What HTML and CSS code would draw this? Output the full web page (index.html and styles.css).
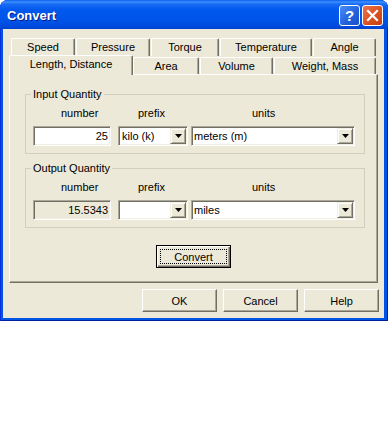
FILE: index.html
```html
<!DOCTYPE html>
<html lang="en">
<head>
  <meta charset="UTF-8" />
  <title>Convert</title>
  <link rel="stylesheet" href="styles.css">
</head>
<body>

<div class="window">
  <div class="titlebar">
    <div class="title">Convert</div>
    <div class="caption-buttons">
      <div class="cap-btn help">?</div>
      <div class="cap-btn close">
        <svg width="13" height="13" viewBox="0 0 13 13">
          <path d="M2 2 L11 11 M11 2 L2 11" stroke="#fff" stroke-width="2.2" fill="none" stroke-linecap="square" />
        </svg>
      </div>
    </div>
  </div>

  <div class="client">
    <!-- tab strip, two rows -->
    <div class="tabs">
      <div class="tab-row back">
        <div class="tab w-speed">Speed</div>
        <div class="tab w-pressure">Pressure</div>
        <div class="tab w-torque">Torque</div>
        <div class="tab w-temp">Temperature</div>
        <div class="tab w-angle">Angle</div>
      </div>
      <div class="tab-row front">
        <div class="tab selected w-length">Length, Distance</div>
        <div class="tab w-area">Area</div>
        <div class="tab w-volume">Volume</div>
        <div class="tab w-weight">Weight, Mass</div>
      </div>
    </div>

    <div class="panel">
      <fieldset class="group">
        <legend>Input Quantity</legend>
        <div class="labels">
          <span class="lbl-number">number</span>
          <span class="lbl-prefix">prefix</span>
          <span class="lbl-units">units</span>
        </div>
        <div class="fields">
          <div class="textbox">25</div>
          <div class="combo prefix">
            <span class="combo-text">kilo (k)</span>
            <span class="drop"><svg width="7" height="4" viewBox="0 0 7 4"><polygon points="0,0 7,0 3.5,4" fill="#000" /></svg></span>
          </div>
          <div class="combo units">
            <span class="combo-text">meters (m)</span>
            <span class="drop"><svg width="7" height="4" viewBox="0 0 7 4"><polygon points="0,0 7,0 3.5,4" fill="#000" /></svg></span>
          </div>
        </div>
      </fieldset>

      <fieldset class="group second">
        <legend>Output Quantity</legend>
        <div class="labels">
          <span class="lbl-number">number</span>
          <span class="lbl-prefix">prefix</span>
          <span class="lbl-units">units</span>
        </div>
        <div class="fields">
          <div class="textbox readonly">15.5343</div>
          <div class="combo prefix">
            <span class="combo-text"></span>
            <span class="drop"><svg width="7" height="4" viewBox="0 0 7 4"><polygon points="0,0 7,0 3.5,4" fill="#000" /></svg></span>
          </div>
          <div class="combo units">
            <span class="combo-text">miles</span>
            <span class="drop"><svg width="7" height="4" viewBox="0 0 7 4"><polygon points="0,0 7,0 3.5,4" fill="#000" /></svg></span>
          </div>
        </div>
      </fieldset>

      <div class="convert-row">
        <button class="btn default"><span class="focus">Convert</span></button>
      </div>
    </div>

    <div class="dialog-buttons">
      <button class="btn">OK</button>
      <button class="btn">Cancel</button>
      <button class="btn">Help</button>
    </div>
  </div>
</div>

</body>
</html>
```

FILE: styles.css
```css
body {
  margin: 0;
  background: #fff;
  font-family: "Liberation Sans", Arial, sans-serif;
  font-size: 11px;
  color: #000;
}

.window {
  width: 388px;
  height: 321px;
  box-sizing: border-box;
  display: flex;
  flex-direction: column;
  background: #0055e5;
  border-radius: 8px 8px 0 0;
  box-shadow: inset 1px 0 #0831d9, inset -1px 0 #001ea0, inset 0 -1px #001ea0;
}

.titlebar {
  height: 29px;
  flex: none;
  display: flex;
  align-items: center;
  padding: 0 5px 0 7px;
  border-radius: 8px 8px 0 0;
  background: linear-gradient(#0a5ff0 0, #3d90fb 2px, #1a6cf5 4px, #0058ee 10px, #0054e8 20px, #0049db 27px, #0040cc 29px);
}

.title {
  margin-top: 2px;
  color: #fff;
  font-weight: bold;
  font-size: 13px;
  text-shadow: 1px 1px #0a1883;
}

.caption-buttons {
  margin-left: auto;
  margin-top: 1px;
  display: flex;
  gap: 2px;
}

.cap-btn {
  width: 21px;
  height: 21px;
  box-sizing: border-box;
  border: 1px solid #fff;
  border-radius: 3px;
  display: flex;
  align-items: center;
  justify-content: center;
  color: #fff;
}

.cap-btn.help {
  background: linear-gradient(135deg, #4a8df8, #2260dc 60%, #1a4fc8);
  font-weight: bold;
  font-size: 15px;
}

.cap-btn.close {
  background: linear-gradient(135deg, #e9744e, #d9501f 60%, #c13e12);
}

.client {
  flex: 1;
  margin: 0 4px 3px 3px;
  background: #ece9d8;
}

/* tabs */
.tabs {
  padding-top: 9px;
}

.tab-row {
  display: flex;
  gap: 1px;
  height: 18px;
}

.tab-row.back {
  padding-left: 8px;
}

.tab-row.front {
  padding-left: 6px;
}

.tab {
  box-sizing: border-box;
  height: 18px;
  border-top: 1px solid #fff;
  border-left: 1px solid #fff;
  border-right: 1px solid #716f64;
  box-shadow: inset -1px 0 #aca899;
  border-radius: 2px 2px 0 0;
  background: #ece9d8;
  text-align: center;
  line-height: 17px;
}

.tab-row.front .tab {
  margin-top: 1px;
  height: 17px;
  line-height: 17px;
}

.tab-row.front .tab.selected {
  position: relative;
  z-index: 1;
  margin-top: -1px;
  margin-right: -1px;
  height: 20px;
  line-height: 16px;
}

.w-speed { width: 64px; }
.w-pressure { width: 74px; }
.w-torque { width: 68px; }
.w-temp { width: 92px; }
.w-angle { width: 63px; }
.w-length { width: 124px; }
.w-area { width: 66px; }
.w-volume { width: 73px; }
.w-weight { width: 102px; }

/* tab page */
.panel {
  margin: 0 6px 0 6px;
  height: 209px;
  box-sizing: border-box;
  padding-top: 13px;
  border: 1px solid #fff;
  border-right-color: #716f64;
  border-bottom-color: #716f64;
  box-shadow: inset -1px -1px #aca899;
}

.group {
  margin: 0 12px 0 15px;
  padding: 6px 8px 7px 7px;
  min-width: 0;
  border: 1px solid #d0d0bf;
}

.group.second {
  margin-top: 8px;
}

.group legend {
  padding: 0 2px;
  margin-left: -2px;
  line-height: 13px;
}

.labels {
  display: grid;
  grid-template-columns: 85px 73px 164px;
  height: 13px;
  line-height: 13px;
}

.lbl-number { padding-left: 28px; }
.lbl-prefix { padding-left: 20px; }
.lbl-units { padding-left: 61px; }

.fields {
  display: grid;
  grid-template-columns: 85px 73px 164px;
  margin-top: 6px;
  height: 20px;
}

.textbox, .combo {
  box-sizing: border-box;
  height: 20px;
  border: 1px solid;
  border-color: #aca899 #fff #fff #aca899;
  box-shadow: inset 1px 1px #716f64, inset -1px -1px #f1efe2;
  background: #fff;
}

.textbox {
  width: 78px;
  text-align: right;
  padding-right: 2px;
  line-height: 18px;
}

.textbox.readonly {
  background: #ece9d8;
}

.combo {
  display: flex;
  align-items: center;
  padding: 1px 1px 1px 3px;
}

.combo.prefix {
  width: 70px;
}

.combo.units {
  width: 164px;
  padding-left: 2px;
}

.combo-text {
  flex: 1;
  line-height: 16px;
}

.drop {
  width: 16px;
  height: 16px;
  box-sizing: border-box;
  display: flex;
  align-items: center;
  justify-content: center;
  background: #ece9d8;
  border: 1px solid;
  border-color: #f1efe2 #716f64 #716f64 #f1efe2;
  box-shadow: inset 1px 1px #fff, inset -1px -1px #aca899;
}

.drop svg {
  display: block;
}

.convert-row {
  display: flex;
  justify-content: center;
  margin-top: 17px;
}

/* push buttons */
.btn {
  width: 75px;
  height: 23px;
  box-sizing: border-box;
  margin: 0;
  padding: 0;
  font-family: "Liberation Sans", Arial, sans-serif;
  font-size: 11px;
  color: #000;
  background: #ece9d8;
  border: 1px solid;
  border-color: #fff #716f64 #716f64 #fff;
  box-shadow: inset -1px -1px #aca899;
}

.btn.default {
  border: 1px solid #000;
  box-shadow: inset 1px 1px #fff, inset -1px -1px #716f64, inset -2px -2px #aca899;
  padding: 3px;
  display: flex;
}

.btn .focus {
  flex: 1;
  border: 1px dotted #000;
  display: flex;
  align-items: center;
  justify-content: center;
}

.dialog-buttons {
  display: flex;
  justify-content: flex-end;
  gap: 6px;
  margin-top: 6px;
  padding-right: 5px;
}
```
